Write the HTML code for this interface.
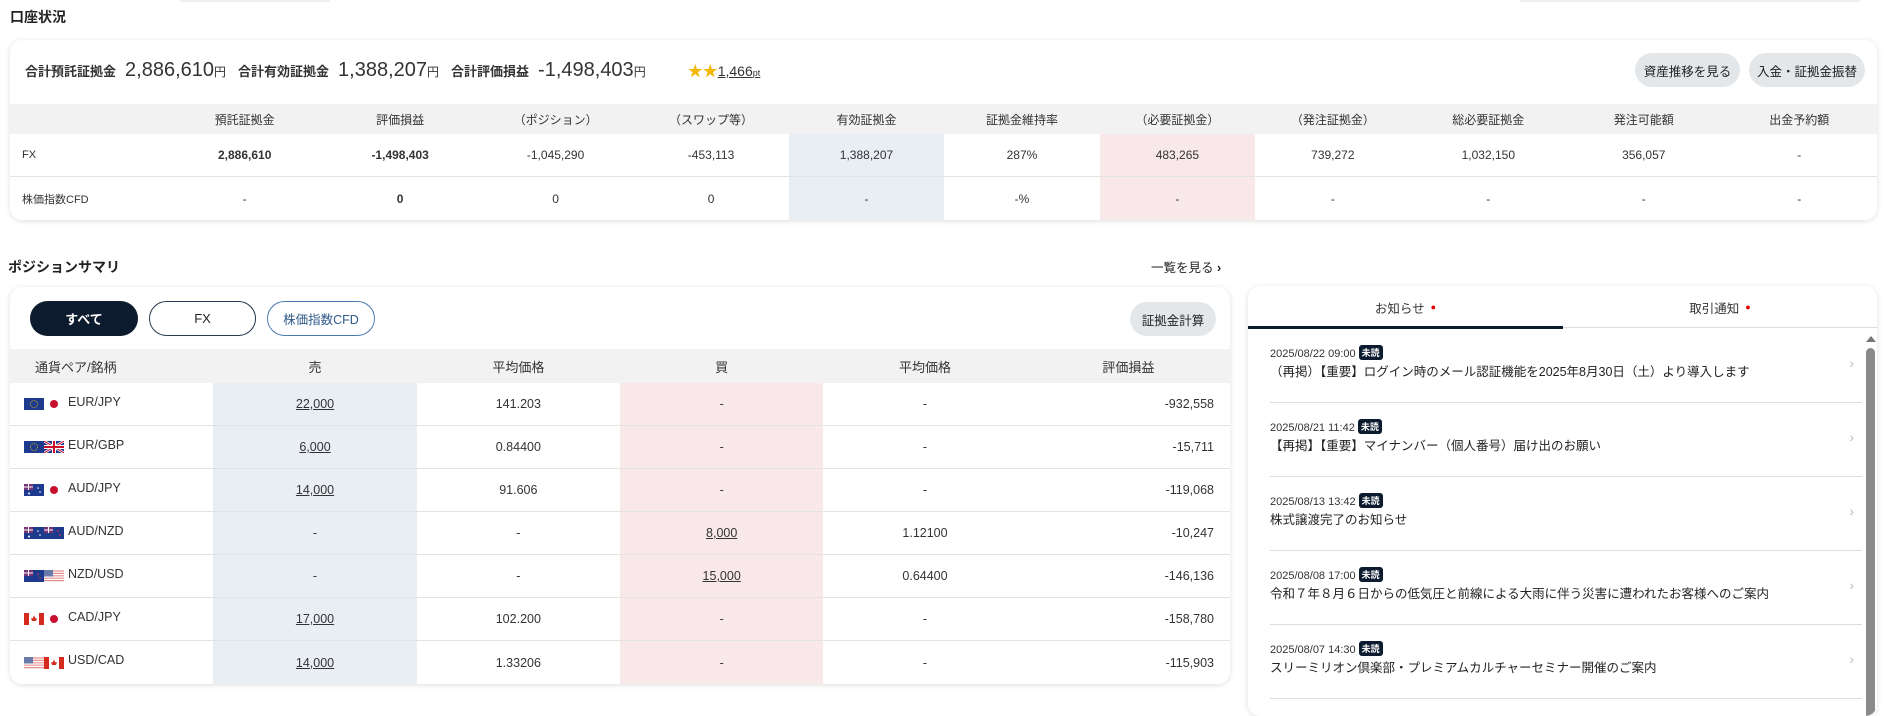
<!DOCTYPE html>
<html><head><meta charset="utf-8">
<style>
*{box-sizing:border-box;margin:0;padding:0}
body{width:1889px;height:702px;overflow:hidden;background:#fff;font-family:"Liberation Sans","Noto Sans CJK JP",sans-serif;color:#333;position:relative}
.abs{position:absolute}
.card{position:absolute;background:#fff;border-radius:12px;box-shadow:0 1px 6px rgba(0,0,0,.13);overflow:hidden}
.h{font-weight:bold;font-size:14px;color:#222}
.row{position:absolute;left:0;right:0;display:flex;align-items:center;font-size:12px}
.row>div{text-align:center;height:100%;display:flex;align-items:center;justify-content:center}
.blue{background:#e9edf4}.pink{background:#f8e8e9}
.btn{position:absolute;background:#e4e7ea;border-radius:18px;font-size:12.5px;display:flex;align-items:center;justify-content:center;color:#222}
.u{text-decoration:underline}
.fl{display:inline-block;width:20px;height:12px;vertical-align:middle}
.jp{display:inline-block;width:20px;height:12px;position:relative;vertical-align:middle}
.jp:after{content:"";position:absolute;left:6px;top:2px;width:8px;height:8px;border-radius:50%;background:#c8102e}
.news{position:absolute;left:22px;right:0;height:74px;border-bottom:1px solid #ddd}
.news .d{position:absolute;left:0;top:16px;font-size:11px;color:#333}
.news .d b{display:inline-block;background:#0d1b2e;color:#fff;font-size:9px;border-radius:3px;padding:1px 3px;margin-left:3px;vertical-align:1px}
.news .t{position:absolute;left:0;top:32px;font-size:12.5px;color:#222}
.news .c{position:absolute;right:8px;top:26px;color:#bbb;font-size:14px}
</style></head><body>
<div class="abs" style="left:180px;top:0;width:150px;height:2px;background:#eee"></div>
<div class="abs" style="left:1520px;top:0;width:340px;height:2px;background:#eee"></div>
<div class="abs h" style="left:10px;top:7px">口座状況</div>

<div class="card" style="left:10px;top:40px;width:1867px;height:180px">
  <div class="abs" style="left:15px;top:19px;font-size:13px;white-space:nowrap;display:flex;align-items:baseline;gap:0">
    <b>合計預託証拠金</b><span style="font-size:20px;margin-left:9px">2,886,610</span><span style="font-size:12px">円</span>
    <b style="margin-left:12px">合計有効証拠金</b><span style="font-size:20px;margin-left:9px">1,388,207</span><span style="font-size:12px">円</span>
    <b style="margin-left:12px">合計評価損益</b><span style="font-size:20px;margin-left:9px">-1,498,403</span><span style="font-size:12px">円</span>
    <span style="margin-left:42px;color:#f5b800;font-size:15px">★★</span><span class="u" style="font-size:14px">1,466</span><span class="u" style="font-size:9px">pt</span>
  </div>
  <div class="btn" style="left:1625px;top:13px;width:105px;height:34px">資産推移を見る</div>
  <div class="btn" style="left:1739px;top:13px;width:116px;height:34px">入金・証拠金振替</div>
  <div class="row" style="top:64px;height:30px;background:#f2f2f2">
    <div style="width:157px"></div><div style="width:155.5px">預託証拠金</div><div style="width:155.5px">評価損益</div><div style="width:155.5px">（ポジション）</div><div style="width:155.5px">（スワップ等）</div><div style="width:155.5px">有効証拠金</div><div style="width:155.5px">証拠金維持率</div><div style="width:155.5px">（必要証拠金）</div><div style="width:155.5px">（発注証拠金）</div><div style="width:155.5px">総必要証拠金</div><div style="width:155.5px">発注可能額</div><div style="width:155.5px">出金予約額</div>
  </div>
  <div class="row" style="top:94px;height:43px;border-bottom:1px solid #e3e3e3">
    <div style="width:157px;justify-content:flex-start;padding-left:12px;font-size:11px">FX</div><div style="width:155.5px;font-weight:bold">2,886,610</div><div style="width:155.5px;font-weight:bold">-1,498,403</div><div style="width:155.5px">-1,045,290</div><div style="width:155.5px">-453,113</div><div class="blue" style="width:155.5px">1,388,207</div><div style="width:155.5px">287%</div><div class="pink" style="width:155.5px">483,265</div><div style="width:155.5px">739,272</div><div style="width:155.5px">1,032,150</div><div style="width:155.5px">356,057</div><div style="width:155.5px">-</div>
  </div>
  <div class="row" style="top:137px;height:43px">
    <div style="width:157px;justify-content:flex-start;padding-left:12px;font-size:11px">株価指数CFD</div><div style="width:155.5px">-</div><div style="width:155.5px;font-weight:bold">0</div><div style="width:155.5px">0</div><div style="width:155.5px">0</div><div class="blue" style="width:155.5px">-</div><div style="width:155.5px">-%</div><div class="pink" style="width:155.5px">-</div><div style="width:155.5px">-</div><div style="width:155.5px">-</div><div style="width:155.5px">-</div><div style="width:155.5px">-</div>
  </div>
</div>

<div class="abs h" style="left:8px;top:257px">ポジションサマリ</div>
<div class="abs" style="left:1151px;top:257px;font-size:12.5px;color:#222">一覧を見る <b>›</b></div>

<div class="card" style="left:10px;top:287px;width:1220px;height:397px">
  <div class="btn" style="left:20px;top:14px;width:108px;height:35px;background:#0d1b2e;color:#fff;font-weight:bold;font-size:13px">すべて</div>
  <div class="btn" style="left:139px;top:14px;width:107px;height:35px;background:#fff;border:1.5px solid #2a3a50;font-size:13px">FX</div>
  <div class="btn" style="left:257px;top:14px;width:108px;height:35px;background:#fff;border:1.5px solid #4a7ab0;color:#2f5a8a;font-size:12.5px">株価指数CFD</div>
  <div class="btn" style="left:1120px;top:15px;width:86px;height:34px">証拠金計算</div>
  <div class="row" style="top:62px;height:34px;background:#f2f2f2;font-size:13px">
    <div style="width:203.5px;justify-content:flex-start;padding-left:25px">通貨ペア/銘柄</div><div style="width:203.5px">売</div><div style="width:203.5px">平均価格</div><div style="width:203.5px">買</div><div style="width:203.5px">平均価格</div><div style="width:203.5px">評価損益</div>
  </div>
  <div id="pos"></div>
</div>

<div class="card" style="left:1248px;top:286px;width:629px;height:430px">
  <div class="abs" style="left:0;top:0;width:315px;height:42px;display:flex;align-items:center;justify-content:center;font-size:12.5px">お知らせ<span style="color:#e00;margin-left:6px;font-size:9px">●</span></div>
  <div class="abs" style="left:315px;top:0;width:314px;height:42px;display:flex;align-items:center;justify-content:center;font-size:12.5px">取引通知<span style="color:#e00;margin-left:6px;font-size:9px">●</span></div>
  <div class="abs" style="left:0;top:41px;width:629px;height:1px;background:#ddd"></div>
  <div class="abs" style="left:0;top:40px;width:315px;height:3px;background:#0d1b2e"></div>
  <div class="abs" style="left:618px;top:50px;width:0;height:0;border-left:5px solid transparent;border-right:5px solid transparent;border-bottom:6px solid #777"></div>
  <div class="abs" style="left:618px;top:62px;width:9px;height:380px;background:#8a8a8a;border-radius:5px"></div>
  <div class="abs" style="left:0;top:43px;width:614px;height:400px">
    <div class="news" style="top:0"><div class="d">2025/08/22 09:00<b>未読</b></div><div class="t">（再掲）【重要】ログイン時のメール認証機能を2025年8月30日（土）より導入します</div><div class="c">›</div></div>
    <div class="news" style="top:74px"><div class="d">2025/08/21 11:42<b>未読</b></div><div class="t">【再掲】【重要】マイナンバー（個人番号）届け出のお願い</div><div class="c">›</div></div>
    <div class="news" style="top:148px"><div class="d">2025/08/13 13:42<b>未読</b></div><div class="t">株式譲渡完了のお知らせ</div><div class="c">›</div></div>
    <div class="news" style="top:222px"><div class="d">2025/08/08 17:00<b>未読</b></div><div class="t">令和７年８月６日からの低気圧と前線による大雨に伴う災害に遭われたお客様へのご案内</div><div class="c">›</div></div>
    <div class="news" style="top:296px"><div class="d">2025/08/07 14:30<b>未読</b></div><div class="t">スリーミリオン倶楽部・プレミアムカルチャーセミナー開催のご案内</div><div class="c">›</div></div>
  </div>
</div>

<script>
var eu='<svg class="fl" viewBox="0 0 20 12"><rect width="20" height="12" fill="#1d3a8f"/><circle cx="10" cy="6" r="3.5" fill="none" stroke="#e8c100" stroke-width=".8" stroke-dasharray="1 1"/></svg>';
var jp='<span class="jp"></span>';
var gb='<svg class="fl" viewBox="0 0 20 12"><rect width="20" height="12" fill="#1d3a8f"/><path d="M0 0L20 12M20 0L0 12" stroke="#fff" stroke-width="2.5"/><path d="M0 0L20 12M20 0L0 12" stroke="#c8102e" stroke-width="1"/><path d="M10 0V12M0 6H20" stroke="#fff" stroke-width="4"/><path d="M10 0V12M0 6H20" stroke="#c8102e" stroke-width="2"/></svg>';
var au='<svg class="fl" viewBox="0 0 20 12"><rect width="20" height="12" fill="#1d3a8f"/><rect width="9" height="6" fill="#a0306a" opacity=".7"/><path d="M0 3H9M4.5 0V6" stroke="#fff" stroke-width="1"/><circle cx="14" cy="4" r=".8" fill="#fff"/><circle cx="16" cy="8" r=".8" fill="#fff"/><circle cx="5" cy="9.5" r="1" fill="#fff"/></svg>';
var nz='<svg class="fl" viewBox="0 0 20 12"><rect width="20" height="12" fill="#1d3a8f"/><rect width="9" height="6" fill="#a0306a" opacity=".7"/><path d="M0 3H9M4.5 0V6" stroke="#fff" stroke-width="1"/><circle cx="14" cy="4" r=".8" fill="#e33"/><circle cx="16" cy="8" r=".8" fill="#e33"/></svg>';
var us='<svg class="fl" viewBox="0 0 20 12"><rect width="20" height="12" fill="#fff"/><path d="M0 1H20M0 3.4H20M0 5.8H20M0 8.2H20M0 10.6H20" stroke="#e39090" stroke-width="1.2"/><rect width="9" height="6.5" fill="#6a7aa8"/></svg>';
var ca='<svg class="fl" viewBox="0 0 20 12"><rect width="20" height="12" fill="#fff"/><rect width="5" height="12" fill="#d52b1e"/><rect x="15" width="5" height="12" fill="#d52b1e"/><path d="M10 2.5L11.5 5.5L13 5L12 8H8L7 5L8.5 5.5Z" fill="#d52b1e"/></svg>';
var rows=[[eu+jp,'EUR/JPY','22,000','141.203','-','-','-932,558'],[eu+gb,'EUR/GBP','6,000','0.84400','-','-','-15,711'],[au+jp,'AUD/JPY','14,000','91.606','-','-','-119,068'],[au+nz,'AUD/NZD','-','-','8,000','1.12100','-10,247'],[nz+us,'NZD/USD','-','-','15,000','0.64400','-146,136'],[ca+jp,'CAD/JPY','17,000','102.200','-','-','-158,780'],[us+ca,'USD/CAD','14,000','1.33206','-','-','-115,903']];
var h='';
rows.forEach(function(r,i){
 var u1=r[2]!='-'?' class="u"':'',u2=r[4]!='-'?' class="u"':'';
 h+='<div class="row" style="top:'+(96+i*43)+'px;height:43px;font-size:12.5px;'+(i<6?'border-bottom:1px solid #e3e3e3':'')+'"><div style="width:203.5px;justify-content:flex-start;padding-left:14px;gap:0">'+r[0]+'<span style="margin-left:4px;margin-top:-5px">'+r[1]+'</span></div><div class="blue" style="width:203.5px"><span'+u1+'>'+r[2]+'</span></div><div style="width:203.5px">'+r[3]+'</div><div class="pink" style="width:203.5px"><span'+u2+'>'+r[4]+'</span></div><div style="width:203.5px">'+r[5]+'</div><div style="width:203.5px;justify-content:flex-end;padding-right:16px">'+r[6]+'</div></div>';
});
document.getElementById('pos').innerHTML=h;
</script>
</body></html>
